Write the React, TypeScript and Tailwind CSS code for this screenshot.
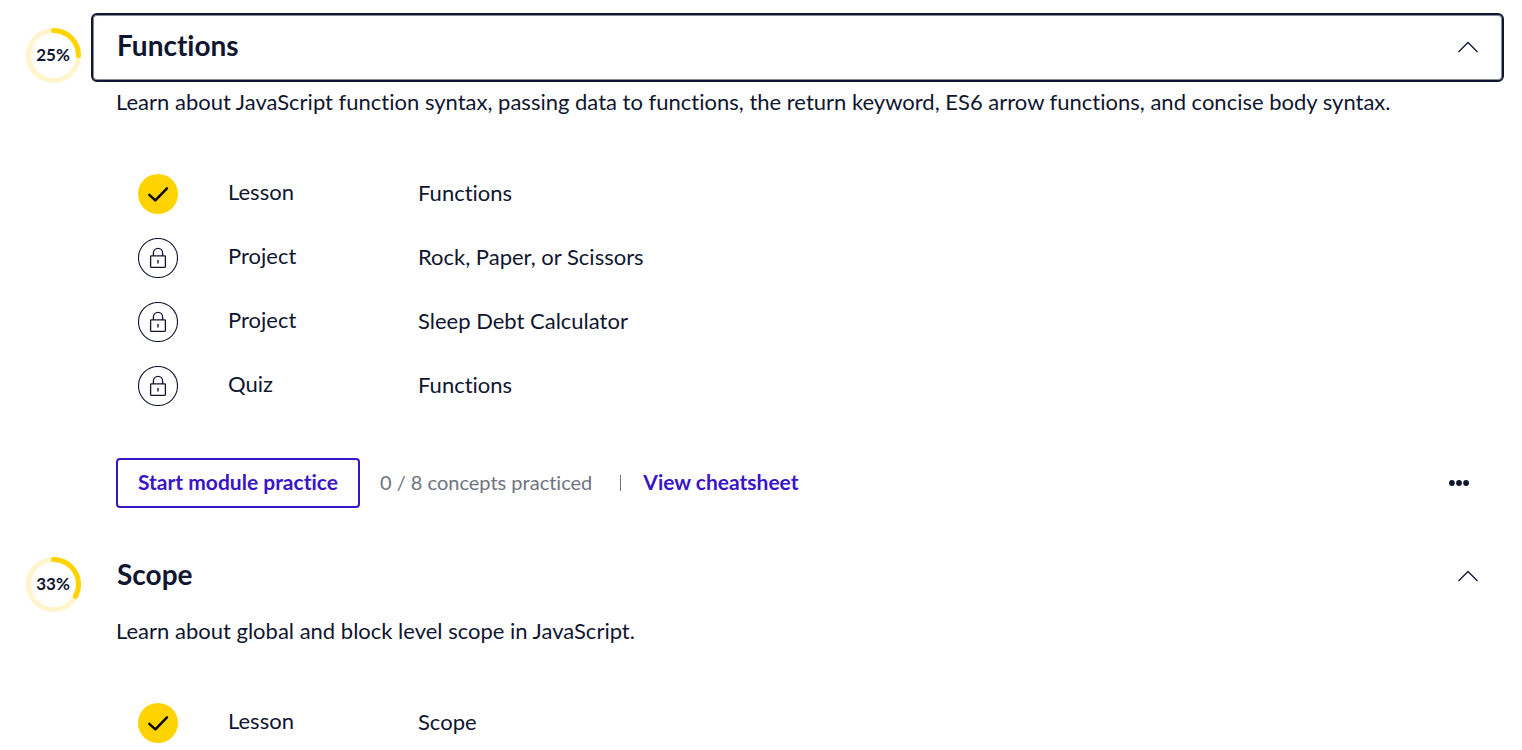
import { useState } from "react";

type Item = { kind: string; title: string; done: boolean };
type Module = {
  name: string;
  percent: number;
  summary: string;
  items: Item[];
  concepts?: number;
};

const modules: Module[] = [
  {
    name: "Functions",
    percent: 25,
    summary:
      "Learn about JavaScript function syntax, passing data to functions, the return keyword, ES6 arrow functions, and concise body syntax.",
    items: [
      { kind: "Lesson", title: "Functions", done: true },
      { kind: "Project", title: "Rock, Paper, or Scissors", done: false },
      { kind: "Project", title: "Sleep Debt Calculator", done: false },
      { kind: "Quiz", title: "Functions", done: false },
    ],
    concepts: 8,
  },
  {
    name: "Scope",
    percent: 33,
    summary: "Learn about global and block level scope in JavaScript.",
    items: [{ kind: "Lesson", title: "Scope", done: true }],
  },
];

function ProgressRing({ percent }: { percent: number }) {
  return (
    <div className="mt-[15px] mr-[9px] grid size-14 shrink-0 place-items-center">
      <svg viewBox="0 0 56 56" className="col-start-1 row-start-1 size-14" fill="none" aria-hidden="true">
        <circle cx="27.5" cy="27.5" r="25" stroke="#fff5cc" strokeWidth="5" />
        <circle
          cx="27.5"
          cy="27.5"
          r="25"
          stroke="#ffd300"
          strokeWidth="5"
          strokeLinecap="round"
          pathLength={100}
          strokeDasharray={`${percent} 100`}
          transform="rotate(-90 27.5 27.5)"
        />
      </svg>
      <span className="col-start-1 row-start-1 pr-0.5 pb-0.5 text-[17px] leading-6 font-bold">{percent}%</span>
    </div>
  );
}

function DoneIcon() {
  return (
    <svg viewBox="0 0 40 40" className="size-10" fill="none" role="img" aria-label="Completed">
      <circle cx="20" cy="20" r="20" fill="#ffd300" />
      <path d="M11.3 20.8 17.3 26.3 29 14.3" stroke="#000" strokeWidth="2.4" strokeLinecap="round" strokeLinejoin="round" />
    </svg>
  );
}

function LockIcon() {
  return (
    <svg viewBox="0 0 40 40" className="size-10" fill="none" stroke="#10162f" role="img" aria-label="Locked">
      <circle cx="20" cy="20" r="19.5" strokeWidth="1.1" />
      <rect x="12.6" y="17.9" width="14.8" height="11.5" rx="0.8" strokeWidth="1.3" />
      <path d="M15.4 17.9v-2.9a4.6 4.6 0 0 1 9.2 0v2.9" strokeWidth="1.3" />
      <path d="M20 22v3.5" strokeWidth="1.4" />
    </svg>
  );
}

function ModuleSection({ module }: { module: Module }) {
  const [open, setOpen] = useState(true);
  return (
    <section className="flex">
      <ProgressRing percent={module.percent} />
      <div className="min-w-0 flex-1">
        <h2>
          <button
            type="button"
            aria-expanded={open}
            onClick={() => setOpen(!open)}
            className={`flex h-[69px] w-full items-center justify-between rounded-md border-2 pr-6 pb-0.5 pl-6 text-left text-[28px] font-bold ${
              module.name === "Functions"
                ? "border-[#10162f] shadow-[inset_0_0_0_1px_#10162f80]"
                : "border-transparent"
            }`}
          >
            <span className="pb-1">{module.name}</span>
            <svg viewBox="0 0 20 12" className={open ? "h-3 w-5" : "h-3 w-5 rotate-180"} fill="none" stroke="#10162f" strokeWidth="1.3" aria-hidden="true">
              <path d="M0.5 11 10 1.5 19.5 11" />
            </svg>
          </button>
        </h2>
        {open && (
          <div className="pt-1.5 pr-6 pl-[25px]">
            <p className="text-[22px] leading-7">{module.summary}</p>
            <ul className="mt-[58px] flex flex-col gap-6 pl-[22px] text-[22px]">
              {module.items.map((item, i) => (
                <li key={i} className="flex h-10 items-center">
                  <span className="w-[90px] shrink-0">{item.done ? <DoneIcon /> : <LockIcon />}</span>
                  <span className="w-[190px] shrink-0 pb-1.5">{item.kind}</span>
                  <span className="pb-1">{item.title}</span>
                </li>
              ))}
            </ul>
            {module.concepts && (
              <div className="mt-[52px] mb-[34px] flex items-center text-[21px]">
                <button type="button" className="h-[50px] rounded border-2 border-[#3a14c8] px-5 pb-0.5 font-bold text-[#3a14c8]">
                  Start module practice
                </button>
                <span className="ml-5 pb-0.5 text-xl text-[#6f7380]">0 / {module.concepts} concepts practiced</span>
                <span className="mr-[22px] ml-7 h-4 w-px bg-[#6f7380]" />
                <a href="#cheatsheet" className="pb-0.5 font-bold text-[#3a14c8]">
                  View cheatsheet
                </a>
                <button type="button" aria-label="More options" className="mr-[11px] ml-auto">
                  <svg viewBox="0 0 20 6" className="h-1.5 w-5" fill="#10162f" aria-hidden="true">
                    <circle cx="2.9" cy="3" r="2.9" />
                    <circle cx="10" cy="3" r="2.9" />
                    <circle cx="17.1" cy="3" r="2.9" />
                  </svg>
                </button>
              </div>
            )}
          </div>
        )}
      </div>
    </section>
  );
}

export default function App() {
  return (
    <main className="min-h-screen bg-white pt-[13px] pr-[18px] pl-[26px] font-['Lato',sans-serif] text-[#10162f] [font-variant-ligatures:none]">
      {modules.map((module) => (
        <ModuleSection key={module.name} module={module} />
      ))}
    </main>
  );
}
